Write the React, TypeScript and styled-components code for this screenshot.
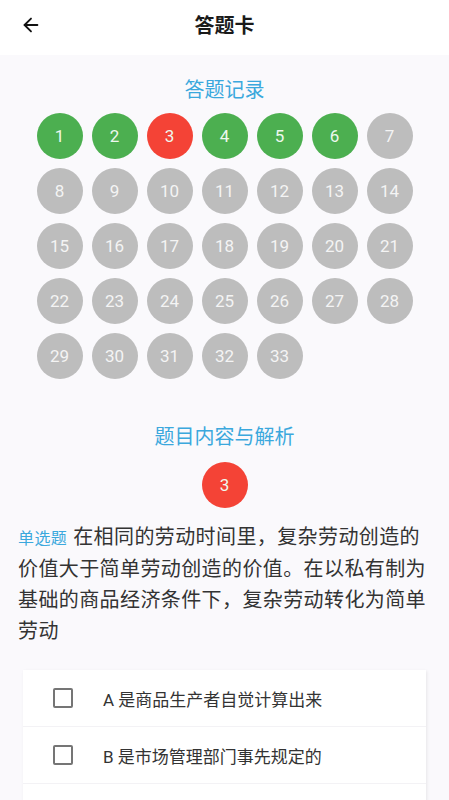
import React from 'react';
import styled, { createGlobalStyle } from 'styled-components';
import { ArrowLeft } from 'lucide-react';

const GlobalStyle = createGlobalStyle`
  html, body {
    margin: 0;
    padding: 0;
    background: #faf9fc;
  }
  body {
    font-family: Roboto, "Noto Sans CJK SC", sans-serif;
  }
  * {
    box-sizing: border-box;
  }
`;

const Page = styled.div`
  min-height: 100vh;
  background: #faf9fc;
  overflow: hidden;
`;

const Header = styled.header`
  height: 55px;
  background: #ffffff;
  display: flex;
  align-items: center;
  justify-content: center;
  position: relative;
`;

const BackButton = styled.button`
  position: absolute;
  left: 19px;
  top: 13px;
  width: 24px;
  height: 24px;
  padding: 0;
  border: none;
  background: none;
  color: #111;
  display: flex;
  align-items: center;
  justify-content: center;
`;

const HeaderTitle = styled.h1`
  margin: 0 0 6px;
  font-size: 20px;
  font-weight: 700;
  color: #1a1a1a;
`;

const SectionTitle = styled.h2<{ $top: number }>`
  margin: ${p => p.$top}px 0 0;
  font-size: 20px;
  line-height: 28px;
  font-weight: 400;
  text-align: center;
  color: #3ba8dd;
`;

const Grid = styled.div`
  display: grid;
  grid-template-columns: repeat(7, 46px);
  gap: 9px;
  justify-content: center;
  margin-top: 9px;
`;

const statusColor = {
  right: '#4caf50',
  wrong: '#f44336',
  empty: '#bdbdbd',
};

type Status = keyof typeof statusColor;

const Ball = styled.div<{ $status: Status }>`
  width: 46px;
  height: 46px;
  border-radius: 50%;
  background: ${p => statusColor[p.$status]};
  color: ${p => (p.$status === 'empty' ? '#f4f4f4' : '#eef8ee')};
  font-size: 17px;
  display: flex;
  align-items: center;
  justify-content: center;
`;

const CurrentWrap = styled.div`
  display: flex;
  justify-content: center;
  margin-top: 11px;
`;

const Question = styled.p`
  margin: 14px 0 0;
  padding: 0 18px;
  font-size: 20px;
  line-height: 31px;
  letter-spacing: 0.4px;
  color: #333;
`;

const TypeTag = styled.span`
  font-size: 16px;
  color: #3ba8dd;
  margin-right: 6px;
`;

const OptionCard = styled.div`
  margin: 23px 23px 0;
  background: #ffffff;
  box-shadow: 1px 1px 3px rgba(0, 0, 0, 0.08);
`;

const OptionRow = styled.div`
  height: 57px;
  display: flex;
  align-items: center;
  padding-left: 30px;
  border-bottom: 1px solid #f3f2f5;
`;

const CheckBox = styled.span`
  width: 20px;
  height: 20px;
  border: 2px solid #757575;
  border-radius: 2px;
  flex-shrink: 0;
`;

const OptionText = styled.span`
  margin-left: 30px;
  font-size: 17px;
  color: #333;
`;

const statuses: Status[] = Array.from({ length: 33 }, (_, i) =>
  i < 6 ? (i === 2 ? 'wrong' : 'right') : 'empty'
);

const options = [
  'A 是商品生产者自觉计算出来',
  'B 是市场管理部门事先规定的',
  'C 是在商品生产者背后由社会过程决定的',
];

export default function App() {
  return (
    <Page>
      <GlobalStyle />
      <Header>
        <BackButton>
          <ArrowLeft size={22} strokeWidth={2} />
        </BackButton>
        <HeaderTitle>答题卡</HeaderTitle>
      </Header>

      <SectionTitle $top={21}>答题记录</SectionTitle>
      <Grid>
        {statuses.map((s, i) => (
          <Ball key={i} $status={s}>
            {i + 1}
          </Ball>
        ))}
      </Grid>

      <SectionTitle $top={44}>题目内容与解析</SectionTitle>
      <CurrentWrap>
        <Ball $status="wrong">3</Ball>
      </CurrentWrap>

      <Question>
        <TypeTag>单选题</TypeTag>
        在相同的劳动时间里，复杂劳动创造的价值大于简单劳动创造的价值。在以私有制为基础的商品经济条件下，复杂劳动转化为简单劳动
      </Question>

      <OptionCard>
        {options.map(o => (
          <OptionRow key={o}>
            <CheckBox />
            <OptionText>{o}</OptionText>
          </OptionRow>
        ))}
      </OptionCard>
    </Page>
  );
}
